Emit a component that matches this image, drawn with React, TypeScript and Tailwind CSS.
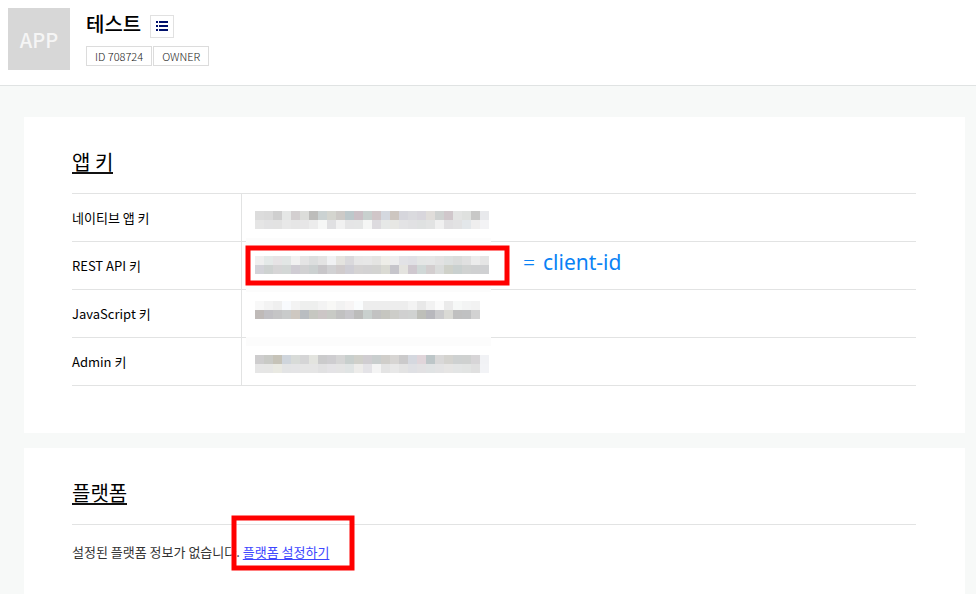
import React from "react";

type KeyRow = {
  label: string;
  top: number;
  patch?: number;
  upper: string;
  lower: string;
  highlighted?: boolean;
};

const CELL = 9;

const rows: KeyRow[] = [
  {
    label: "네이티브 앱 키",
    top: 17,
    upper:
      "dcdcdc dadada cfcfcf e5e7e6 d3cfd0 dcddda bdbdbb cbd2d2 d4d5cf cdcac7 bdc8cb cbc0c6 c8d0ce d0c6c8 d4d8df cdc6c0 d6d6dc dadade d8d6dc e0ddda cfd2d1 d0c7cb e3e4e3 dfe1df c8c8c7 e8e9ec",
    lower:
      "e5e5e5 e2e2e3 e2e2e2 e8e8e8 e6e6e6 e7e6e7 ececec f6f7f6 e0e0e2 f1f1f1 e5e5e6 e5e6e6 f5f6f5 dddbdf e6e8e7 e7e7e4 e3e3e5 e1e1e3 dfe1e1 e2e3e3 f0f0f0 e0dfe1 e2e2e3 e3e7ea efeeee f3f3f5",
  },
  {
    label: "REST API 키",
    top: 14,
    patch: -4,
    highlighted: true,
    upper:
      "efefef e4e9e8 e6e3e5 e2e6e5 f1f1f1 e4e4e4 dcdede e3e3e3 f0f1f3 e4e3df dad9dc e6e6e6 e7e7e7 e4e4e2 eeede8 ededee e2e2e6 e0e0e5 e4e6e5 e5e6e6 e2e2e2 dce0df dadcdb e0e0e0 ececec e5e5e5",
    lower:
      "d3d3d9 ced2d1 d6d5d6 d3d7d6 cfccd3 d1d1d2 cbd0d0 c8c6c9 d1d1d3 d0cbcc cfced5 d5d3d3 d3d2d3 d3d3d1 dadad3 c6c5cb e4e3df cfc8cf d0d8d7 d3cecf dadcdb cfd1c9 c9d0cf d0d2d1 cfd0d1 cfd0d2",
  },
  {
    label: "JavaScript 키",
    top: 11,
    patch: -7,
    upper:
      "f8f8f8 f3f3f3 efefef f8fafd f3f3f3 eeefee eeefee f3f3f3 f8f8f6 f2f2f2 f7f5f5 fafcfd ededed ededed ededed ededed ededed f3f3f3 e8e8e8 f2f2f2 fbfbfb ebebeb f6f8f7 f3f4f4 f2f2f2",
    lower:
      "bfbab8 c1c0c4 c5c5c6 c9cbcb cec8c1 b9bdc1 c6c7c1 ccc6c6 c8cac5 c1c1c1 c7c6ca bcbcbb c9d0ce c2c2c2 c6c6c0 cdcdc9 d0d0d0 d0d2d1 bebfb9 b8b8bd cbcbcd dadad5 c0c0c0 c0c1c2 d2d2d2",
  },
  {
    label: "Admin 키",
    top: 17,
    patch: -1,
    upper:
      "cecdce c9cac6 c6c3b8 cfd5dc d8dbd8 d5d5d6 e3e4df cbcbcc cecdd0 d5d5d5 c8cfcd d0d0ca d0cdd1 c9cece d0ceca d7d5d3 cbcacb d5d8df e0d5da bdc6c8 d9d8d8 d4d3cf ced1d1 cfd1d0 d7d5d7 f1f2f5",
    lower:
      "e6e6e6 e6e6e5 e9e9e2 e3e4e5 e4e4e6 e5e5e5 e5e5e5 e1e1e2 e4e3e6 e4e4e4 e0e4e4 edecea e4e3e7 f4f4f4 e4e4e4 e8e8e8 e3e3e3 dfe0e4 e2e1e3 e0e3e4 e3e3e4 e6e5e4 e3e5e5 e2e4e3 e0e0e0 f2f3f6",
  },
];

function MaskedKey({ row }: { row: KeyRow }) {
  const bands = [row.upper.split(" "), row.lower.split(" ")];
  return (
    <svg
      width="245"
      height="47"
      shapeRendering="crispEdges"
      className="ml-1 shrink-0 overflow-visible"
      aria-hidden="true"
    >
      {row.patch !== undefined && (
        <rect x="0" y={row.patch} width="245" height={CELL} fill="#fcfcfc" />
      )}
      {bands.map((band, line) =>
        band.map((color, i) => (
          <rect
            key={`${line}-${i}`}
            x={CELL + i * CELL}
            y={row.top + line * CELL}
            width={CELL}
            height={CELL}
            fill={`#${color}`}
          />
        )),
      )}
    </svg>
  );
}

function Section({ title, className, children }: { title: string; className: string; children: React.ReactNode }) {
  return (
    <section className={`bg-white pr-[49px] pl-12 ${className}`}>
      <div className="flex h-[76px] items-end pb-[19px]">
        <h2 className="border-b-2 border-[#111] text-xl leading-5">{title}</h2>
      </div>
      {children}
    </section>
  );
}

export default function App() {
  return (
    <div className="flex min-h-screen flex-col bg-[#f7f9f8] font-['Noto_Sans_CJK_KR',sans-serif] text-black">
      <header className="flex gap-4 border-b border-[#e0e3e3] bg-white px-2 pt-2 pb-[15px]">
        <div className="flex size-[62px] items-center justify-center bg-[#d7d7d7] pt-px text-xl font-medium text-[#f5f5f5]">
          APP
        </div>
        <div>
          <div className="flex h-8 items-center gap-[9px]">
            <h1 className="text-xl leading-6 font-medium">테스트</h1>
            <button
              type="button"
              aria-label="앱 목록"
              className="mt-1 flex h-[23px] w-6 items-center justify-center border border-[#e1e1e1] bg-white"
            >
              <svg width="12" height="10" fill="#00106b" shapeRendering="crispEdges" aria-hidden="true">
                <path d="M0 0h2v2H0zM3 0h9v2H3zM0 4h2v2H0zM3 4h9v2H3zM0 8h2v2H0zM3 8h9v2H3z" />
              </svg>
            </button>
          </div>
          <div className="mt-[6px] flex gap-px text-[11px] leading-[18px] font-light text-[#222]">
            <span className="border border-[#dcdcdc] px-2">ID 708724</span>
            <span className="border border-[#dcdcdc] px-2">OWNER</span>
          </div>
        </div>
      </header>

      <main className="flex flex-1 flex-col gap-[15px] pt-[31px] pr-[11px] pl-6">
        <Section title="앱 키" className="pb-[47px]">
          <table className="w-full border-separate border-spacing-0 border-t border-[#e2e3e3] text-[13px]">
            <tbody>
              {rows.map((row) => (
                <tr key={row.label}>
                  <th
                    scope="row"
                    className="w-[170px] border-r border-b border-[#e2e3e3] p-0 text-left font-normal"
                  >
                    {row.label}
                  </th>
                  <td className="border-b border-[#e2e3e3] p-0">
                    <div className="flex h-[47px] items-center">
                      <MaskedKey row={row} />
                      {row.highlighted && (
                        <div className="relative flex h-full items-center">
                          <svg width="265" height="41" className="absolute top-[3px] right-full z-10 -mr-[19px]" aria-hidden="true">
                            <rect x="3" y="3" width="259" height="35" fill="none" stroke="#ff0000" strokeWidth="5" />
                          </svg>
                          <p className="flex items-center gap-2 pb-2 pl-8 font-['Noto_Sans',sans-serif] text-[21px] leading-6 text-[#0a82f5]">
                            <span className="font-light">=</span>
                            <span>client-id</span>
                          </p>
                        </div>
                      )}
                    </div>
                  </td>
                </tr>
              ))}
            </tbody>
          </table>
        </Section>

        <Section title="플랫폼" className="flex-1">
          <p className="border-t border-[#e2e3e3] pt-[17px] text-[13px] leading-5 text-[#333]">
            설정된 플랫폼 정보가 없습니다.{" "}
            <span className="relative inline-block">
              <a href="#platform" className="text-[#3d46ff] underline underline-offset-2">
                플랫폼 설정하기
              </a>
              <svg width="124" height="56" className="absolute -top-[27px] -left-3" aria-hidden="true">
                <rect x="3" y="3" width="118" height="50" fill="none" stroke="#ff0000" strokeWidth="5" />
              </svg>
            </span>
          </p>
        </Section>
      </main>
    </div>
  );
}
